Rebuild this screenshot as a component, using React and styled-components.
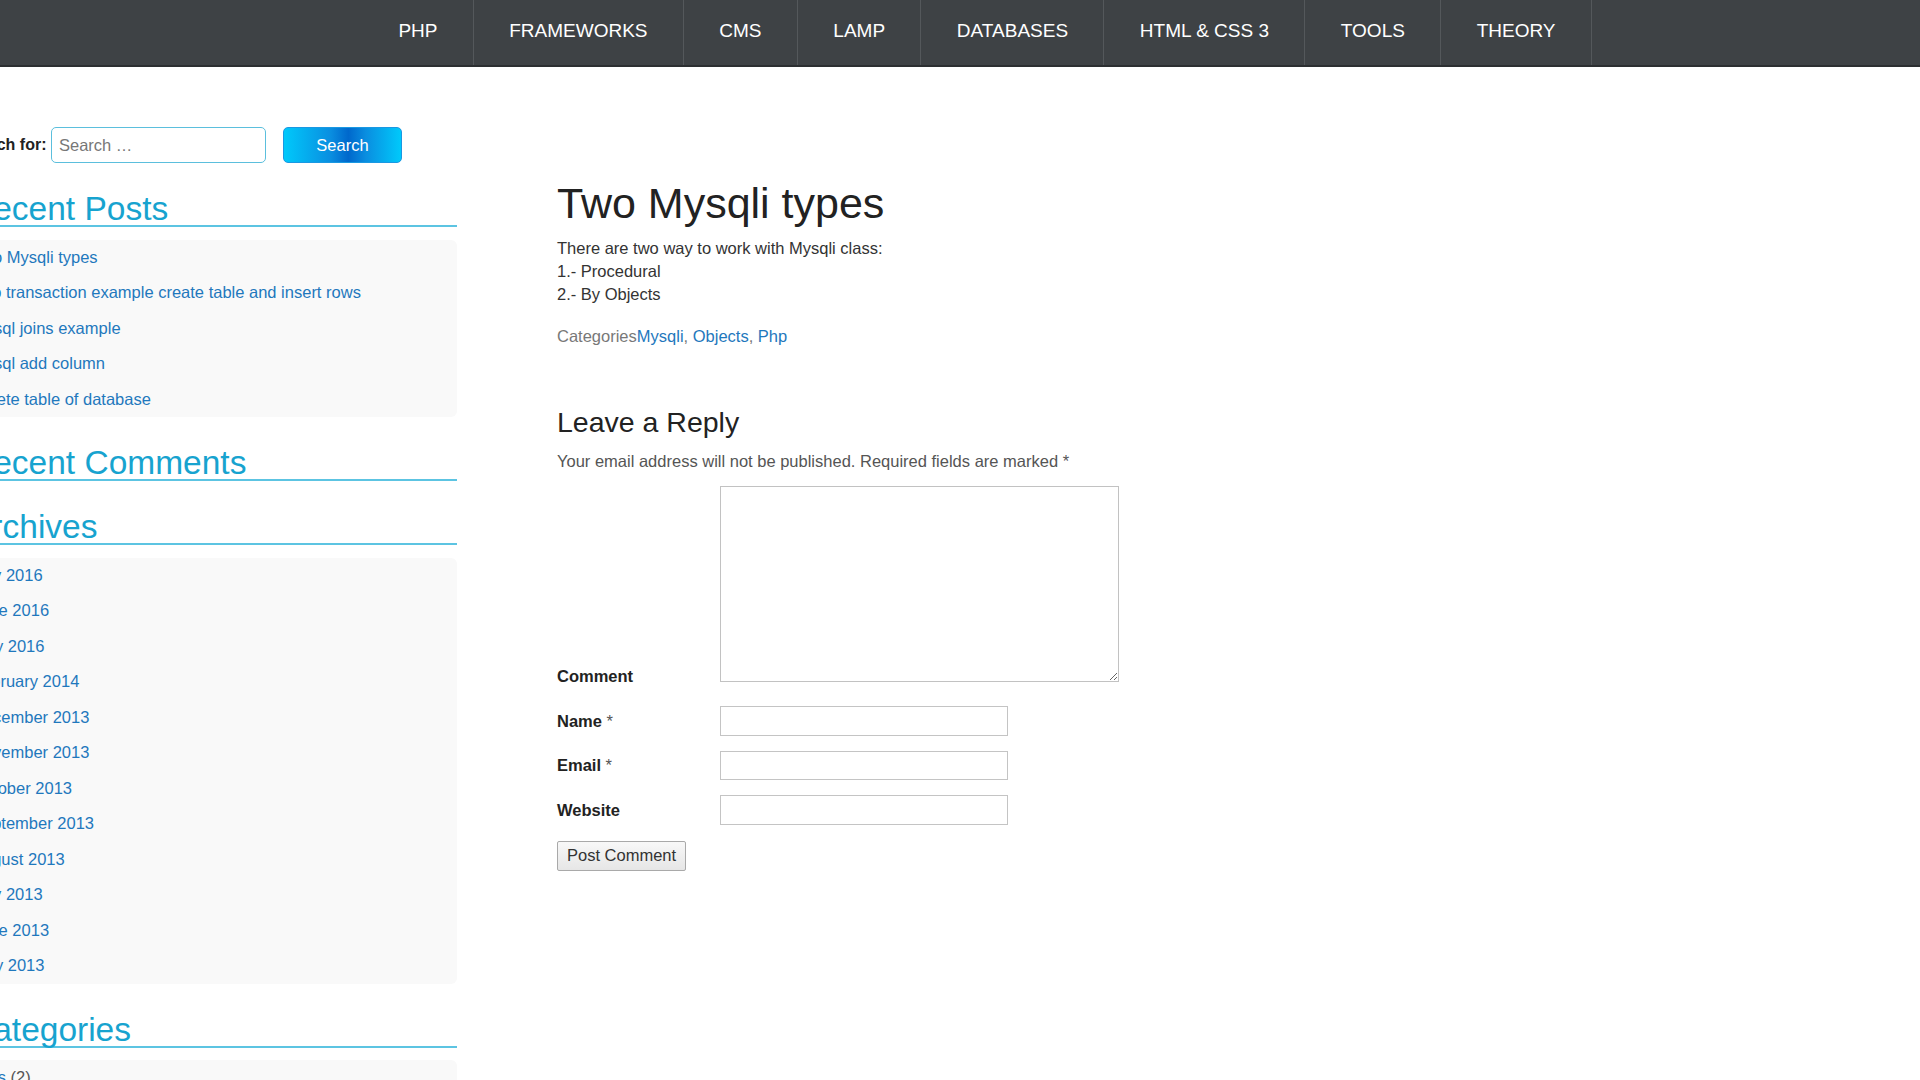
import React from "react";
import styled, { createGlobalStyle } from "styled-components";

const menu = ["PHP", "FRAMEWORKS", "CMS", "LAMP", "DATABASES", "HTML & CSS 3", "TOOLS", "THEORY"];

const recentPosts = [
    "Two Mysqli types",
    "Pdo transaction example create table and insert rows",
    "Mysql joins example",
    "Mysql add column",
    "Delete table of database",
];

const archives = [
    "July 2016", "June 2016", "May 2016", "February 2014", "December 2013", "November 2013",
    "October 2013", "September 2013", "August 2013", "July 2013", "June 2013", "May 2013",
];

const fields = [
    { label: "Name", required: true },
    { label: "Email", required: true },
    { label: "Website", required: false },
];

const App = () => {
    return (
        <React.Fragment>
            <GlobalStyle />
            <TopBar>
                <Menu>
                    {menu.map((item) => (
                        <MenuItem key={item}>{item}</MenuItem>
                    ))}
                </Menu>
            </TopBar>
            <Page>
                <Sidebar>
                    <SearchForm onSubmit={(e) => e.preventDefault()}>
                        <SearchLabel>Search for:</SearchLabel>
                        <SearchInput type="search" placeholder="Search …" />
                        <SearchButton type="submit">Search</SearchButton>
                    </SearchForm>

                    <WidgetTitle first>Recent Posts</WidgetTitle>
                    <WidgetList>
                        {recentPosts.map((p) => (
                            <WidgetItem key={p}><a href="#">{p}</a></WidgetItem>
                        ))}
                    </WidgetList>

                    <WidgetTitle>Recent Comments</WidgetTitle>

                    <WidgetTitle>Archives</WidgetTitle>
                    <WidgetList>
                        {archives.map((a) => (
                            <WidgetItem key={a}><a href="#">{a}</a></WidgetItem>
                        ))}
                    </WidgetList>

                    <WidgetTitle>Categories</WidgetTitle>
                    <WidgetList>
                        <WidgetItem><a href="#">Cms</a> <Count>(2)</Count></WidgetItem>
                        <WidgetItem><a href="#">Databases</a> <Count>(4)</Count></WidgetItem>
                    </WidgetList>
                </Sidebar>

                <Content>
                    <PostTitle>Two Mysqli types</PostTitle>
                    <PostBody>
                        There are two way to work with Mysqli class:<br />
                        1.- Procedural<br />
                        2.- By Objects
                    </PostBody>
                    <PostMeta>
                        Categories<a href="#">Mysqli</a>, <a href="#">Objects</a>, <a href="#">Php</a>
                    </PostMeta>

                    <ReplyTitle>Leave a Reply</ReplyTitle>
                    <Notes>Your email address will not be published. Required fields are marked *</Notes>

                    <CommentForm onSubmit={(e) => e.preventDefault()}>
                        <FieldRow bottom>
                            <FieldLabel bottom>Comment</FieldLabel>
                            <CommentBox />
                        </FieldRow>
                        {fields.map((f) => (
                            <FieldRow key={f.label}>
                                <FieldLabel>
                                    {f.label}
                                    {f.required && <Star> *</Star>}
                                </FieldLabel>
                                <TextField type="text" />
                            </FieldRow>
                        ))}
                        <PostButton type="submit">Post Comment</PostButton>
                    </CommentForm>
                </Content>
            </Page>
        </React.Fragment>
    );
};

const GlobalStyle = createGlobalStyle`
    * { box-sizing: border-box; }
    body {
        margin: 0;
        background: #fff;
        font-family: "Liberation Sans", Arial, sans-serif;
        font-size: 16.5px;
        color: #333;
        overflow: hidden;
    }
    a { text-decoration: none; }
`;

const TopBar = styled.nav`
    height: 67px;
    background: #3e4245;
    border-bottom: 2px solid #2c2f31;
`;

const Menu = styled.ul`
    display: flex;
    margin: 0;
    padding: 0 0 0 363px;
    list-style: none;
    height: 100%;
`;

const MenuItem = styled.li`
    display: flex;
    align-items: center;
    padding: 0 35.4px 3px;
    border-right: 1px solid #54585b;
    color: #fff;
    font-size: 19px;
    white-space: nowrap;
`;

const Page = styled.div`
    display: flex;
    align-items: flex-start;
`;

const Sidebar = styled.aside`
    flex-shrink: 0;
    width: 488px;
    margin-left: -31px;
    padding-top: 60px;
`;

const SearchForm = styled.form`
    display: flex;
    align-items: center;
    height: 36px;
    margin-bottom: 29px;
`;

const SearchLabel = styled.label`
    margin: 0 4.5px 0 -7px;
    font-size: 16px;
    font-weight: bold;
    color: #222;
    white-space: nowrap;
`;

const SearchInput = styled.input`
    width: 215px;
    height: 36px;
    padding: 0 7px;
    border: 1.5px solid #5bbfdd;
    border-radius: 5px;
    font-family: inherit;
    font-size: 16.5px;
    color: #333;
    outline: none;
    &::placeholder { color: #777; }
`;

const SearchButton = styled.button`
    width: 119px;
    height: 36px;
    margin-left: 17px;
    border: 1px solid #1a98e2;
    border-radius: 5px;
    background: linear-gradient(to right, #00c9fb 0%, #0a8ee0 40%, #0068cc 55%, #0a8ee0 70%, #00c9fb 100%);
    color: #fff;
    font-family: inherit;
    font-size: 16.5px;
    cursor: pointer;
`;

const WidgetTitle = styled.h2`
    margin: ${(p) => (p.first ? "0" : "29px")} 0 12.6px;
    padding: 0;
    font-size: 33.5px;
    font-weight: normal;
    line-height: 33px;
    color: #17a3cf;
    border-bottom: 2px solid #5cc4e2;
    white-space: nowrap;
`;

const WidgetList = styled.ul`
    margin: 0;
    padding: 0;
    list-style: none;
    background: #f9f9f9;
    border-radius: 6px;
`;

const WidgetItem = styled.li`
    height: 35.5px;
    padding-left: 3px;
    line-height: 35.5px;
    white-space: nowrap;
    a { color: #1f78bd; }
`;

const Count = styled.span`
    color: #555;
`;

const Content = styled.main`
    width: 600px;
    margin-left: 100px;
    padding-top: 111px;
`;

const PostTitle = styled.h1`
    margin: 0 0 7px;
    font-size: 43px;
    font-weight: normal;
    line-height: 1.2;
    color: #222;
`;

const PostBody = styled.p`
    margin: 0 0 18.5px;
    line-height: 23.2px;
    color: #333;
`;

const PostMeta = styled.div`
    line-height: 23.2px;
    color: #787878;
    a { color: #1f78bd; }
`;

const ReplyTitle = styled.h3`
    margin: 57px 0 10.7px;
    font-size: 28.5px;
    font-weight: normal;
    line-height: 1.2;
    color: #222;
`;

const Notes = styled.p`
    margin: 0 0 12.8px;
    line-height: 23.2px;
    color: #555;
    white-space: nowrap;
`;

const CommentForm = styled.form`
    display: flex;
    flex-direction: column;
    align-items: flex-start;
`;

const FieldRow = styled.div`
    display: flex;
    align-items: ${(p) => (p.bottom ? "flex-end" : "center")};
    margin-bottom: ${(p) => (p.bottom ? "24.5px" : "15px")};
`;

const FieldLabel = styled.label`
    width: 163px;
    flex-shrink: 0;
    font-weight: bold;
    color: #222;
    line-height: ${(p) => (p.bottom ? "12px" : "23px")};
`;

const Star = styled.span`
    font-weight: normal;
    color: #555;
`;

const CommentBox = styled.textarea`
    width: 399px;
    height: 196px;
    border: 1.5px solid #c2c2c2;
    font-family: inherit;
    font-size: 16.5px;
`;

const TextField = styled.input`
    width: 288px;
    height: 29.5px;
    border: 1.5px solid #c4c4c4;
    font-family: inherit;
    font-size: 16.5px;
`;

const PostButton = styled.button`
    height: 30px;
    padding: 0 9px;
    margin-top: 1px;
    border: 1px solid #a9a9a9;
    border-radius: 2px;
    background: linear-gradient(#f8f8f8, #e6e6e6);
    color: #333;
    font-family: inherit;
    font-size: 16.5px;
    cursor: pointer;
`;

export default App;
